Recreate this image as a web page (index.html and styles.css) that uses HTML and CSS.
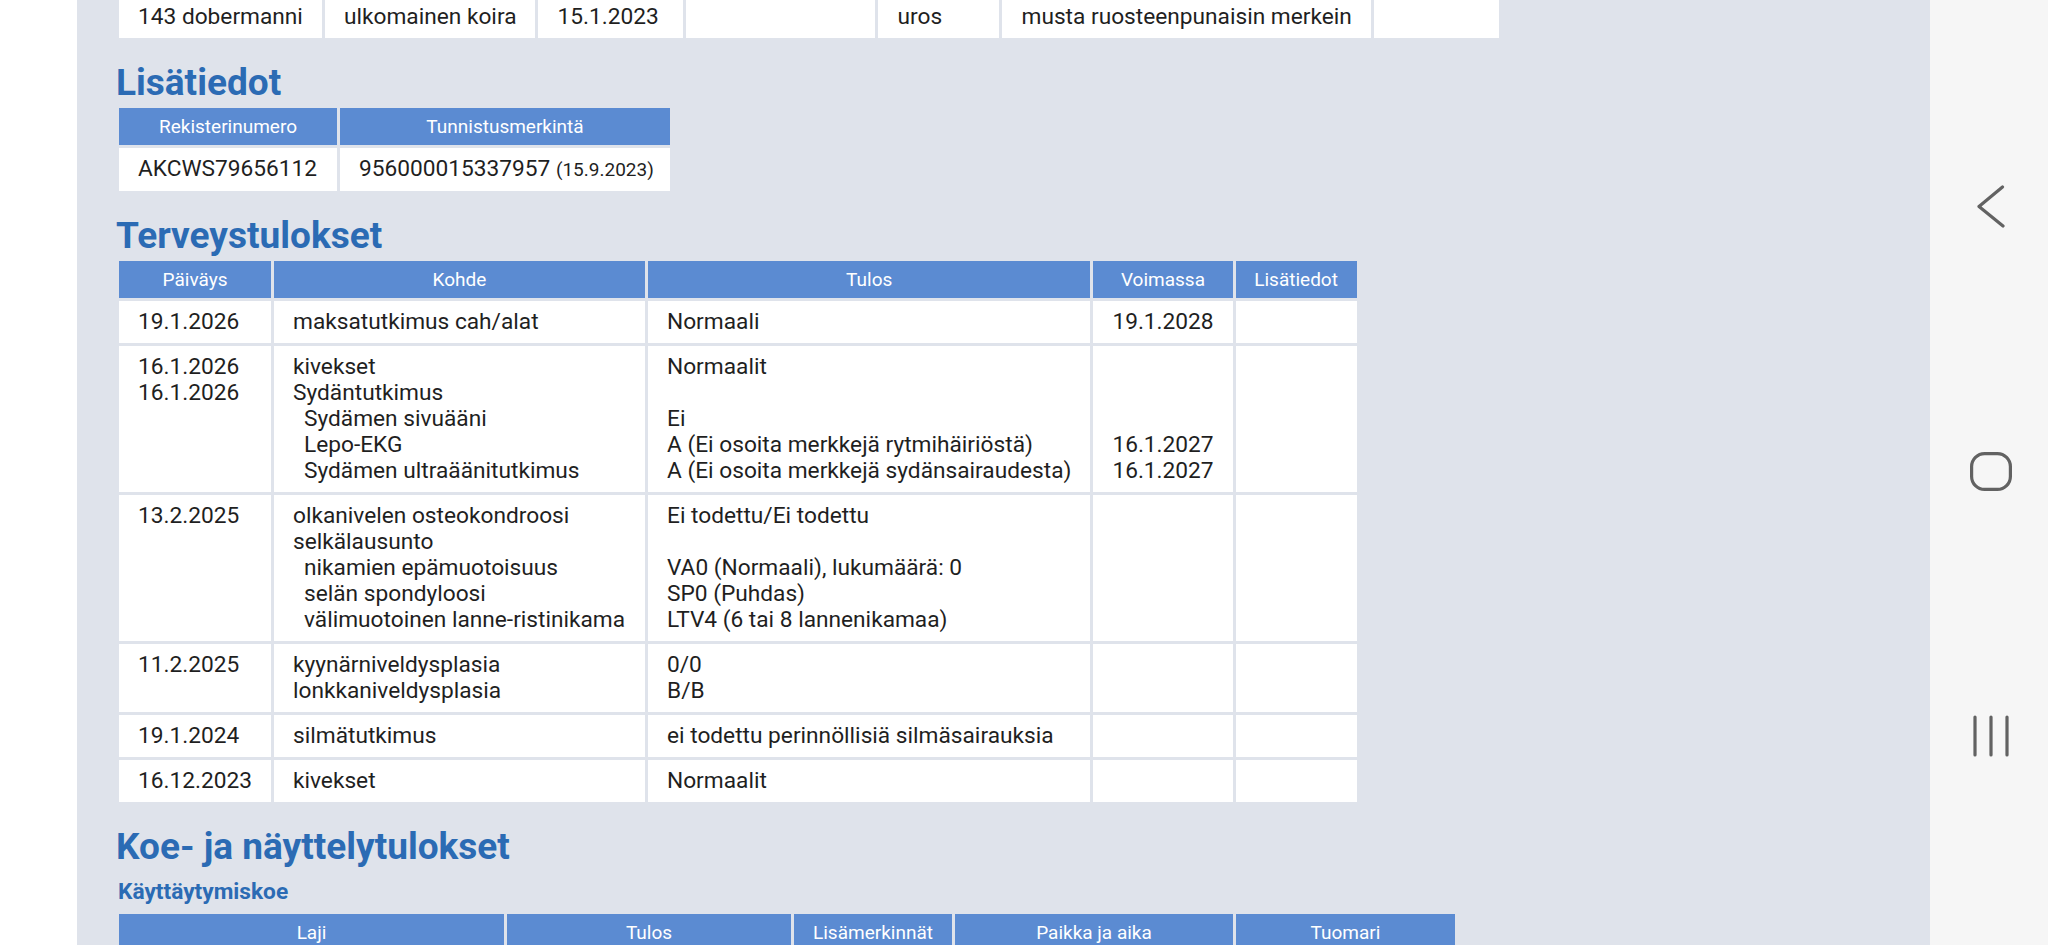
FILE: index.html
```html
<!DOCTYPE html>
<html lang="fi">
<head>
<meta charset="utf-8">
<title>Koiran tiedot</title>
<link rel="stylesheet" href="styles.css">
</head>
<body>
<div class="screen">
  <div class="page">
    <div class="panel">
      <table class="grid t-top">
        <tr>
          <td class="w-breed">143 dobermanni</td>
          <td class="w-origin">ulkomainen koira</td>
          <td class="w-born">15.1.2023</td>
          <td class="w-empty1"></td>
          <td class="w-sex">uros</td>
          <td class="w-color">musta ruosteenpunaisin merkein</td>
          <td class="w-empty2"></td>
        </tr>
      </table>

      <h2 class="sec-title">Lisätiedot</h2>
      <table class="grid t-info">
        <tr>
          <th class="w-reg">Rekisterinumero</th>
          <th class="w-id">Tunnistusmerkintä</th>
        </tr>
        <tr>
          <td>AKCWS79656112</td>
          <td class="tight">956000015337957 <span class="small">(15.9.2023)</span></td>
        </tr>
      </table>

      <h2 class="sec-title">Terveystulokset</h2>
      <table class="grid t-health">
        <tr>
          <th class="w-date">Päiväys</th>
          <th class="w-target">Kohde</th>
          <th class="w-result">Tulos</th>
          <th class="w-valid">Voimassa</th>
          <th class="w-extra">Lisätiedot</th>
        </tr>
        <tr>
          <td>19.1.2026</td>
          <td>maksatutkimus cah/alat</td>
          <td>Normaali</td>
          <td>19.1.2028</td>
          <td></td>
        </tr>
        <tr>
          <td><div>16.1.2026</div><div>16.1.2026</div></td>
          <td>
            <div>kivekset</div>
            <div>Sydäntutkimus</div>
            <div class="sub">Sydämen sivuääni</div>
            <div class="sub">Lepo-EKG</div>
            <div class="sub">Sydämen ultraäänitutkimus</div>
          </td>
          <td>
            <div>Normaalit</div>
            <div>&nbsp;</div>
            <div>Ei</div>
            <div>A (Ei osoita merkkejä rytmihäiriöstä)</div>
            <div>A (Ei osoita merkkejä sydänsairaudesta)</div>
          </td>
          <td>
            <div>&nbsp;</div>
            <div>&nbsp;</div>
            <div>&nbsp;</div>
            <div>16.1.2027</div>
            <div>16.1.2027</div>
          </td>
          <td></td>
        </tr>
        <tr>
          <td>13.2.2025</td>
          <td>
            <div>olkanivelen osteokondroosi</div>
            <div>selkälausunto</div>
            <div class="sub">nikamien epämuotoisuus</div>
            <div class="sub">selän spondyloosi</div>
            <div class="sub">välimuotoinen lanne-ristinikama</div>
          </td>
          <td>
            <div>Ei todettu/Ei todettu</div>
            <div>&nbsp;</div>
            <div>VA0 (Normaali), lukumäärä: 0</div>
            <div>SP0 (Puhdas)</div>
            <div>LTV4 (6 tai 8 lannenikamaa)</div>
          </td>
          <td></td>
          <td></td>
        </tr>
        <tr>
          <td>11.2.2025</td>
          <td><div>kyynärniveldysplasia</div><div>lonkkaniveldysplasia</div></td>
          <td><div>0/0</div><div>B/B</div></td>
          <td></td>
          <td></td>
        </tr>
        <tr>
          <td>19.1.2024</td>
          <td>silmätutkimus</td>
          <td>ei todettu perinnöllisiä silmäsairauksia</td>
          <td></td>
          <td></td>
        </tr>
        <tr>
          <td>16.12.2023</td>
          <td>kivekset</td>
          <td>Normaalit</td>
          <td></td>
          <td></td>
        </tr>
      </table>

      <h2 class="sec-title">Koe- ja näyttelytulokset</h2>
      <h3 class="sub-title">Käyttäytymiskoe</h3>
      <table class="grid t-test">
        <tr>
          <th class="w-kind">Laji</th>
          <th class="w-tres">Tulos</th>
          <th class="w-notes">Lisämerkinnät</th>
          <th class="w-place">Paikka ja aika</th>
          <th class="w-judge">Tuomari</th>
        </tr>
      </table>
    </div>
  </div>

  <nav class="navbar">
    <svg class="nav-back" width="28" height="43" viewBox="0 0 28 43" aria-label="Takaisin">
      <path d="M25.5 2 L2 21.5 L26 41" fill="none" stroke="#626262" stroke-width="3.2" stroke-linecap="round" stroke-linejoin="round"/>
    </svg>
    <svg class="nav-home" width="42" height="39" viewBox="0 0 42 39" aria-label="Koti">
      <rect x="1.6" y="1.6" width="38.8" height="35.8" rx="13" ry="13" fill="none" stroke="#626262" stroke-width="3.2"/>
    </svg>
    <svg class="nav-recent" width="36" height="42" viewBox="0 0 36 42" aria-label="Viimeisimmät">
      <path d="M2 2 V40 M18 2 V40 M34 2 V40" fill="none" stroke="#626262" stroke-width="3.2" stroke-linecap="round"/>
    </svg>
  </nav>
</div>
</body>
</html>
```

FILE: styles.css
```css
html, body {
  margin: 0;
  padding: 0;
  height: 100%;
  overflow: hidden;
}

body {
  font-family: Roboto, "Noto Sans", "Liberation Sans", sans-serif;
  background: #ffffff;
  color: #222222;
}

.screen {
  display: flex;
  height: 945px;
}

.page {
  flex: 1;
  padding-left: 77px;
  background: #ffffff;
  min-width: 0;
}

.panel {
  height: 100%;
  background: #dfe3eb;
  padding-left: 39px;
  overflow: hidden;
}

/* tables */
.grid {
  border-collapse: separate;
  border-spacing: 3px;
  font-size: 22.7px;
  line-height: 26px;
  color: #1f1f1f;
}

.grid th {
  background: #5b8bd2;
  color: #ffffff;
  font-weight: 400;
  font-size: 19px;
  line-height: 23px;
  padding: 7px 8px;
  text-align: center;
  white-space: nowrap;
}

.grid td {
  background: #ffffff;
  padding: 8px 19px;
  vertical-align: top;
  text-align: left;
  white-space: nowrap;
}

.grid td.tight {
  padding-right: 10px;
}

.grid .sub {
  padding-left: 11px;
}

.grid .small {
  font-size: 19px;
}

.t-top {
  margin-top: -7px;
}

/* top row widths (content widths) */
.w-breed { width: 165px; }
.w-origin { width: 172px; }
.w-born { width: 107px; }
.w-empty1 { width: 151px; }
.w-sex { width: 83px; }
.w-color { width: 329px; }
.w-empty2 { width: 87px; }

/* lisatiedot */
.w-reg { width: 202px; }
.w-id { width: 314px; }

/* terveystulokset */
.w-date { width: 136px; }
.w-target { width: 355px; }
.w-result { width: 426px; }
.w-valid { width: 123px; }
.w-extra { width: 105px; }

/* kayttaytymiskoe */
.w-kind { width: 369px; }
.w-tres { width: 268px; }
.w-notes { width: 142px; }
.w-place { width: 262px; }
.w-judge { width: 203px; }

/* headings */
.sec-title {
  margin: 22px 0 2px;
  font-size: 37px;
  line-height: 40px;
  font-weight: 700;
  color: #2b6bb4;
}

.sub-title {
  margin: 13px 0 7px;
  padding-left: 2px;
  font-size: 22.7px;
  line-height: 24px;
  font-weight: 700;
  color: #2b6bb4;
}

/* navigation bar */
.navbar {
  width: 118px;
  flex: none;
  background: #f6f6f6;
  display: flex;
  flex-direction: column;
  align-items: center;
  padding-left: 4px;
  box-sizing: border-box;
}

.nav-back {
  margin-top: 185px;
}

.nav-home {
  margin-top: 224px;
}

.nav-recent {
  margin-top: 224px;
}
```
